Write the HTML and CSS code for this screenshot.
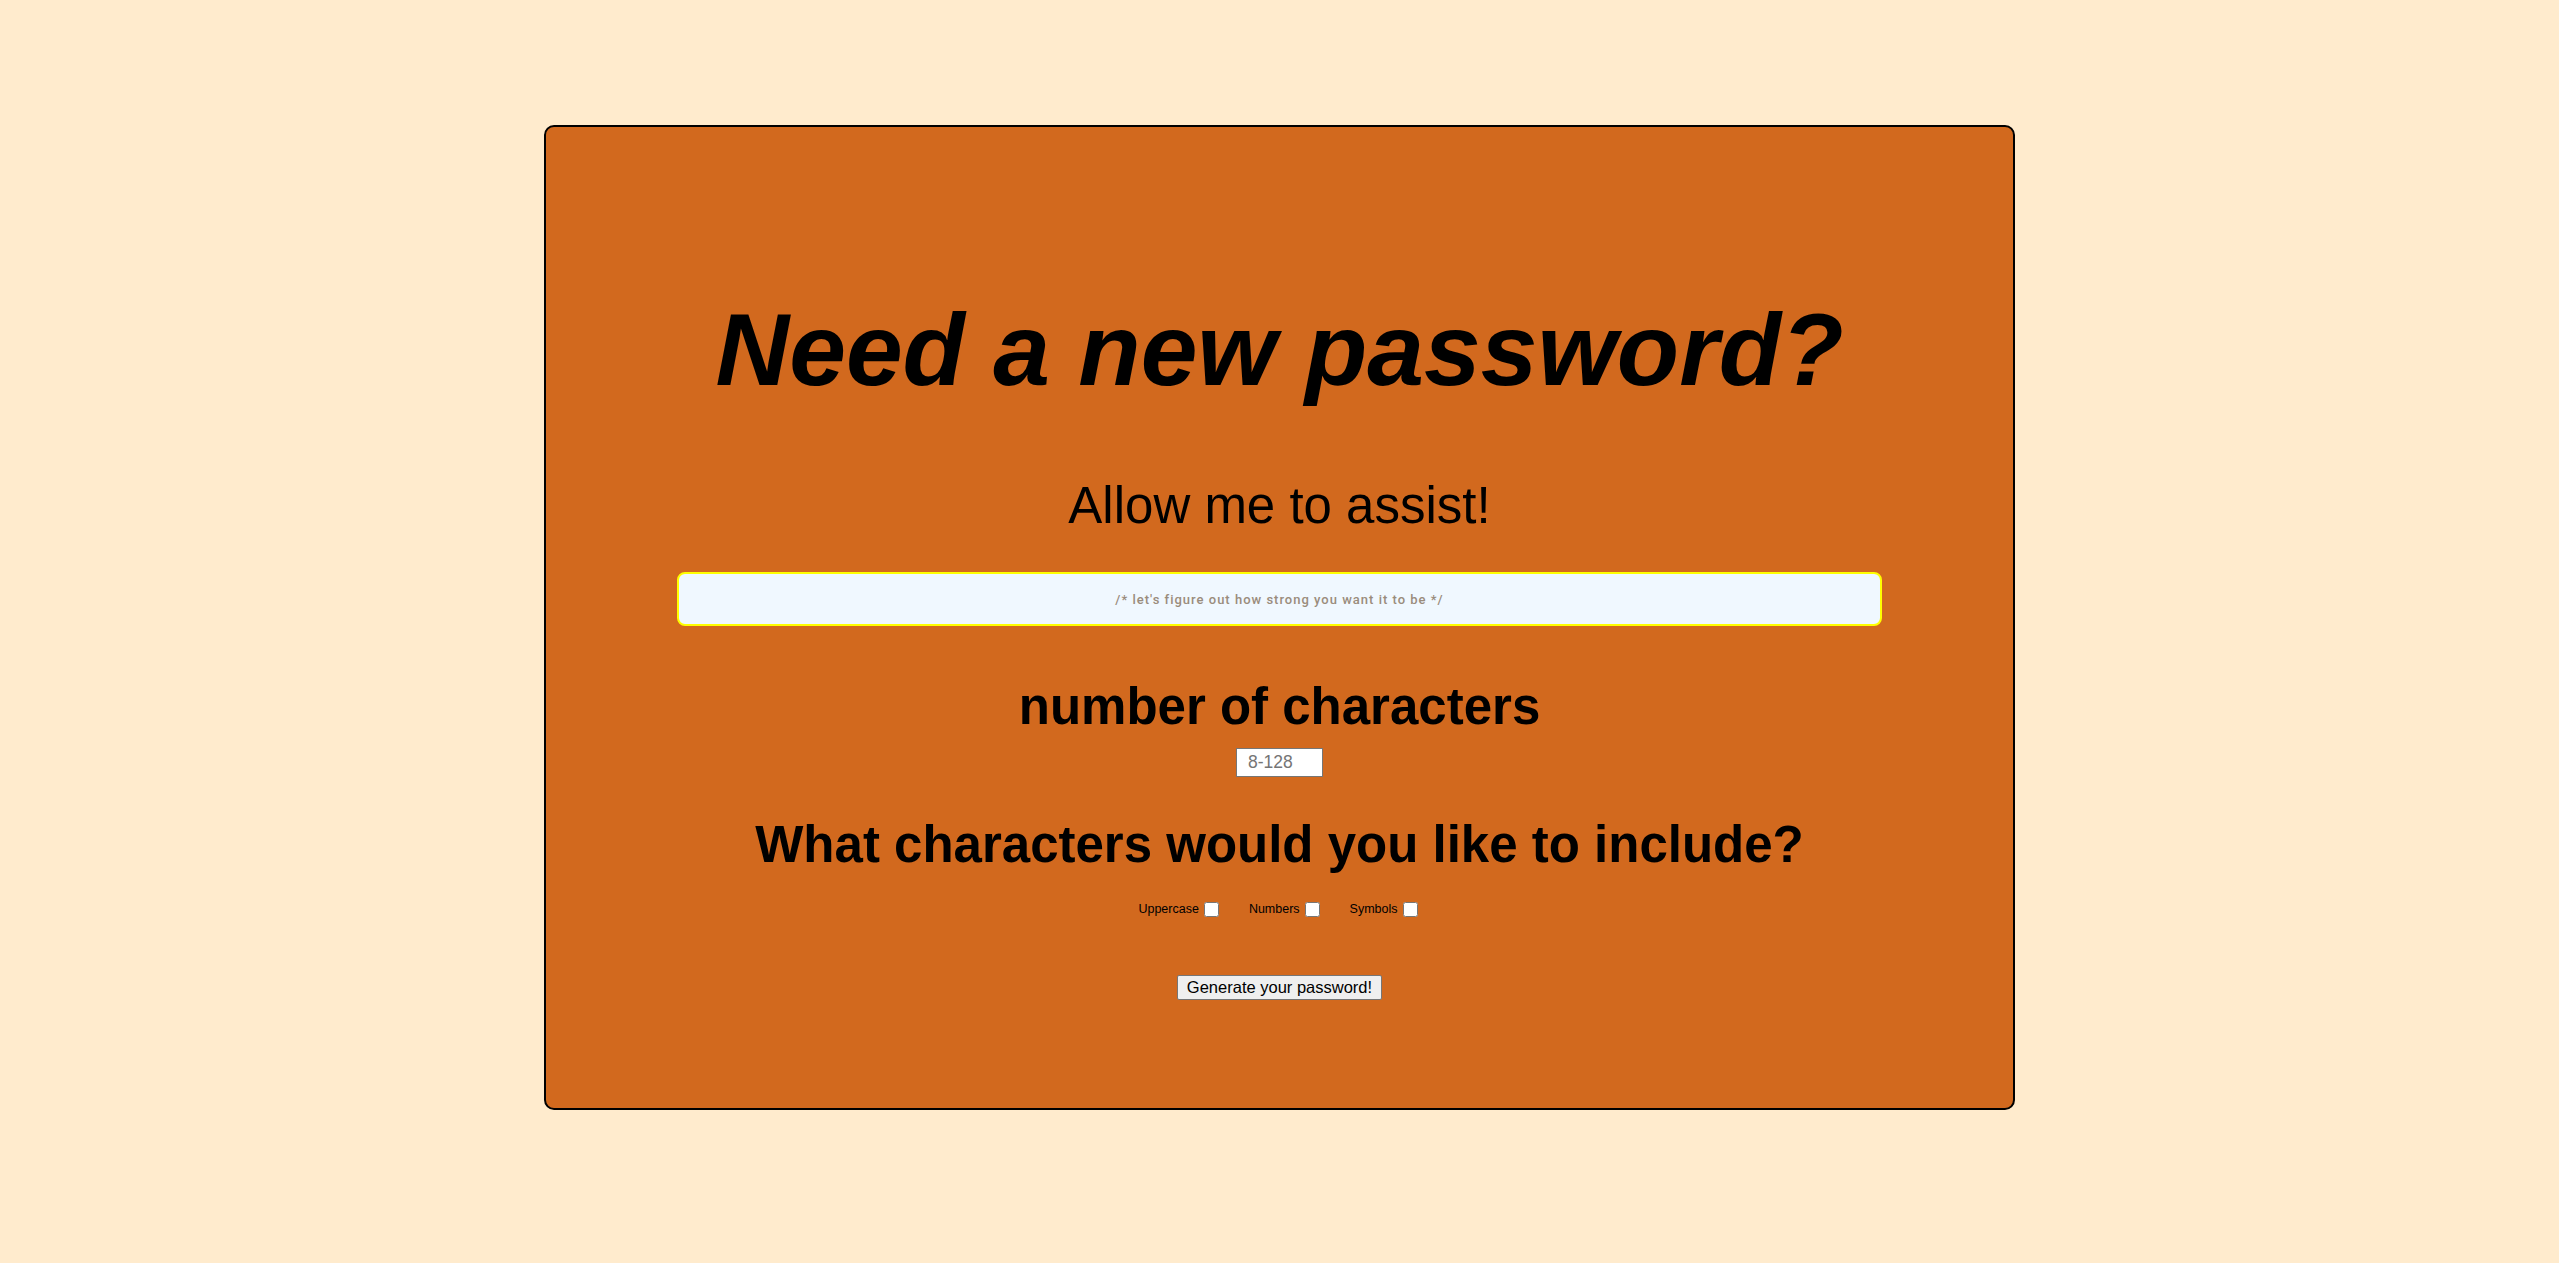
FILE: index.html
```html
<!DOCTYPE html>
<html lang="en">
<head>
<meta charset="utf-8">
<title>Password Generator</title>
<link rel="stylesheet" href="styles.css">
</head>
<body>
<main class="card">
  <h1 class="title">Need a new password?</h1>
  <h2 class="subtitle">Allow me to assist!</h2>
  <textarea class="output" readonly placeholder="/* let's figure out how strong you want it to be */"></textarea>
  <h2 class="section">number of characters</h2>
  <input class="length" type="text" placeholder="8-128">
  <h2 class="section question">What characters would you like to include?</h2>
  <div class="options">
    <label class="option">Uppercase<input class="check" type="checkbox"></label>
    <label class="option">Numbers<input class="check" type="checkbox"></label>
    <label class="option">Symbols<input class="check" type="checkbox"></label>
  </div>
  <button class="generate" type="button">Generate your password!</button>
</main>
</body>
</html>
```

FILE: styles.css
```css
html, body {
  margin: 0;
  padding: 0;
  background: #ffebcd;
  min-height: 100%;
}

body {
  font-family: "Liberation Sans", Arial, sans-serif;
  color: #000;
  padding-top: 125px;
  min-height: 1263px;
  box-sizing: border-box;
}

.card {
  box-sizing: border-box;
  width: 1471px;
  margin: 0 auto;
  background: #d2691e;
  border: 2px solid #000;
  border-radius: 10px;
  display: flex;
  flex-direction: column;
  align-items: center;
  padding: 172px 0 108px;
}

.title {
  margin: 0 0 79px;
  font-size: 102px;
  line-height: 102px;
  font-weight: bold;
  font-style: italic;
}

.subtitle {
  margin: 0 0 41px;
  font-size: 51px;
  line-height: 51px;
  font-weight: normal;
}

.output {
  box-sizing: border-box;
  width: 1205px;
  height: 54px;
  margin: 0 0 55px;
  padding: 18px 10px 0;
  background: #f0f8ff;
  border: 2px solid #ffff00;
  border-radius: 8px;
  resize: none;
  overflow: hidden;
  text-align: center;
  font-family: Roboto, "Liberation Sans", sans-serif;
  font-size: 13px;
  font-weight: 500;
  line-height: 15px;
  letter-spacing: 1px;
  color: #9a8c7c;
  outline: none;
}

.output::placeholder {
  color: #9a8c7c;
  opacity: 1;
}

.section {
  margin: 0 0 16px;
  font-size: 51px;
  line-height: 51px;
  font-weight: bold;
}

.question {
  margin-bottom: 32px;
}

.length {
  box-sizing: border-box;
  width: 87px;
  height: 29px;
  margin: 0 0 42px;
  padding: 0 11px;
  border: 1px solid #767676;
  background: #fff;
  font-family: "Liberation Sans", Arial, sans-serif;
  font-size: 17.5px;
  color: #000;
}

.length::placeholder {
  color: #757575;
}

.options {
  display: flex;
  align-items: center;
  gap: 30px;
  height: 15px;
  margin: 0 0 58px;
  padding-right: 3px;
}

.option {
  display: flex;
  align-items: center;
  gap: 5px;
  font-size: 12.5px;
  line-height: 15px;
}

.check {
  width: 15px;
  height: 15px;
  margin: 0;
}

.generate {
  box-sizing: border-box;
  height: 25px;
  padding: 0 9px;
  background: #efefef;
  border: 1px solid #767676;
  border-radius: 2px;
  font-family: "Liberation Sans", Arial, sans-serif;
  font-size: 16.5px;
  color: #000;
}
```
